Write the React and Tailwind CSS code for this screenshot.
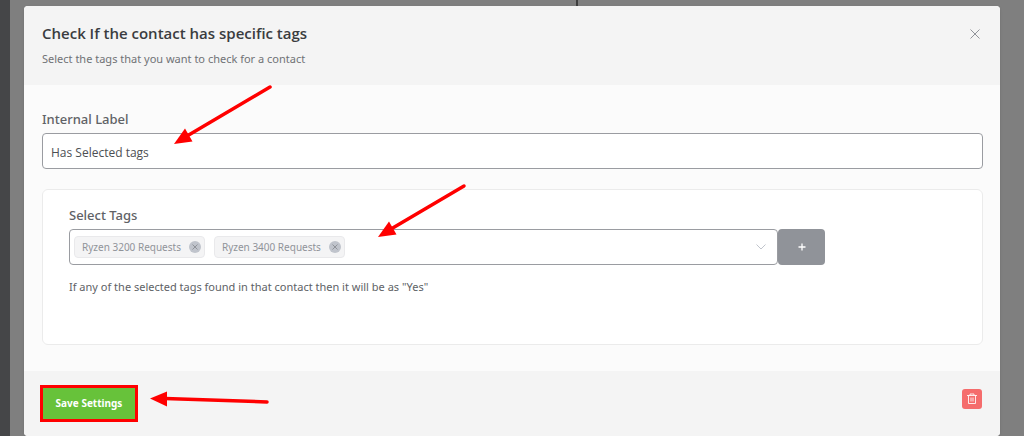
import React from "react";

const TAGS = ["Ryzen 3200 Requests", "Ryzen 3400 Requests"];

function DownArrow({ className, startX, startY }) {
  return (
    <svg className={`pointer-events-none absolute h-[60px] w-[100px] ${className}`} viewBox="0 0 100 60" aria-hidden="true">
      <path d={`M${startX} ${startY} L13 51`} stroke="#ff0000" strokeWidth="3.5" strokeLinecap="round" fill="none" />
      <path d="M0 59 L11 43.5 L18.5 56.5 Z" fill="#ff0000" />
    </svg>
  );
}

function LeftArrow() {
  return (
    <svg className="pointer-events-none absolute left-[110px] top-0 h-4 w-[120px]" viewBox="0 0 120 16" aria-hidden="true">
      <path d="M15 7.5 L117 11" stroke="#ff0000" strokeWidth="3.5" strokeLinecap="round" fill="none" />
      <path d="M0 7.5 L17 0.5 L17 15.5 Z" fill="#ff0000" />
    </svg>
  );
}

function Tag({ name }) {
  return (
    <span className="flex h-[22px] items-center gap-2 rounded border border-[#e9e9eb] bg-[#f4f4f5] pl-[7px] pr-[3px] text-[10px] text-[#909399]">
      {name}
      <button type="button" aria-label={`Remove ${name}`} className="size-3 rounded-full bg-[#c0c4cc] text-[#909399]">
        <svg viewBox="0 0 12 12" className="size-3" aria-hidden="true">
          <path d="M3.5 3.5 L8.5 8.5 M8.5 3.5 L3.5 8.5" stroke="currentColor" fill="none" />
        </svg>
      </button>
    </span>
  );
}

export default function App() {
  return (
    <div className="flex min-h-screen bg-[#7f7f7f] font-['Noto_Sans',sans-serif] text-[#606266]">
      <div className="w-[10px] shrink-0 bg-[#454648]" />
      <div className="relative flex min-w-0 flex-1 pl-[14px] pr-6 pt-[6px] pb-px">
        <div className="absolute left-[566px] top-0 h-[6px] w-0.5 bg-[#3f3f3f]" />
        <section role="dialog" aria-labelledby="dialog-title" className="relative flex min-w-0 flex-1 flex-col overflow-hidden rounded bg-[#fbfbfb] shadow">
          <header className="flex items-start justify-between bg-[#f4f4f4] pb-[17px] pl-[18px] pr-[17px] pt-4">
            <div>
              <h1 id="dialog-title" className="font-['Open_Sans',sans-serif] text-[15px] font-semibold leading-[22px] text-[#3a3c40]">
                Check If the contact has specific tags
              </h1>
              <p className="mt-[5px] text-[11px] leading-[19px] text-[#707276]">Select the tags that you want to check for a contact</p>
            </div>
            <button type="button" aria-label="Close" className="mt-1 flex size-4 items-center justify-center text-[#909399]">
              <svg viewBox="0 0 10 10" className="size-[10px]" aria-hidden="true">
                <path d="M0.5 0.5 L9.5 9.5 M9.5 0.5 L0.5 9.5" stroke="currentColor" fill="none" />
              </svg>
            </button>
          </header>

          <div className="relative flex-1 pb-[26px] pl-[18px] pr-[17px] pt-6">
            <label htmlFor="internal-label" className="block text-[13px] font-medium leading-5">
              Internal Label
            </label>
            <input
              id="internal-label"
              type="text"
              defaultValue="Has Selected tags"
              className="mt-1 block h-9 w-full rounded border border-[#9a9ca1] bg-white px-2 pt-0.5 font-['Open_Sans',sans-serif] text-xs text-[#4d4f53] outline-none"
            />

            <div className="mt-5 rounded-md border border-[#ebebeb] bg-white px-[26px] pb-[47px] pt-[15px]">
              <label htmlFor="tag-search" className="block text-[13px] font-medium leading-5">
                Select Tags
              </label>
              <div className="mt-1 flex max-w-[756px] min-w-0">
                <div className="flex h-9 min-w-0 flex-1 items-center gap-[9px] rounded border border-[#9a9ca1] bg-white pl-1 pr-[10px]">
                  {TAGS.map((tag) => (
                    <Tag key={tag} name={tag} />
                  ))}
                  <input id="tag-search" type="text" role="combobox" aria-expanded="false" className="min-w-0 flex-1 bg-transparent text-xs outline-none" />
                  <svg viewBox="0 0 12 12" className="size-3 shrink-0 text-[#c0c4cc]" aria-hidden="true">
                    <path d="M1.5 3.5 L6 8 L10.5 3.5" stroke="currentColor" fill="none" />
                  </svg>
                </div>
                <button type="button" aria-label="Add tag" className="flex h-9 w-[47px] shrink-0 items-center justify-center rounded bg-[#909399] text-white">
                  <svg viewBox="0 0 8 8" className="size-2" aria-hidden="true">
                    <path d="M4 0.5 V7.5 M0.5 4 H7.5" stroke="currentColor" strokeWidth="1.3" fill="none" />
                  </svg>
                </button>
              </div>
              <p className="mt-3 text-[11px] leading-5 text-[#606266]">If any of the selected tags found in that contact then it will be as "Yes"</p>
            </div>

            <DownArrow className="left-[150px] top-0" startX={96} startY={2} />
            <DownArrow className="left-[354px] top-[93px]" startX={86} startY={8} />
          </div>

          <footer className="relative flex items-start justify-between bg-[#f4f4f4] pb-[14px] pl-4 pr-[18px] pt-[14px]">
            <div className="relative">
              <button type="button" className="block h-[37px] w-[98px] border-[3px] border-[#ff0000] bg-[#67c23a] text-[10px] font-bold text-white">
                Save Settings
              </button>
              <div className="absolute left-0 top-[6px]">
                <LeftArrow />
              </div>
            </div>
            <button type="button" aria-label="Delete" className="mt-1 flex size-5 items-center justify-center rounded-[3px] bg-[#f56c6c] text-white">
              <svg viewBox="0 0 10 12" className="h-3 w-[10px]" fill="none" stroke="currentColor" strokeOpacity="0.85" aria-hidden="true">
                <path d="M0 2.5 H10 M3 2.5 V1 H7 V2.5 M1.5 2.5 V10.5 H8.5 V2.5 M4 4.5 V8.5 M6 4.5 V8.5" />
              </svg>
            </button>
          </footer>
        </section>
      </div>
    </div>
  );
}
